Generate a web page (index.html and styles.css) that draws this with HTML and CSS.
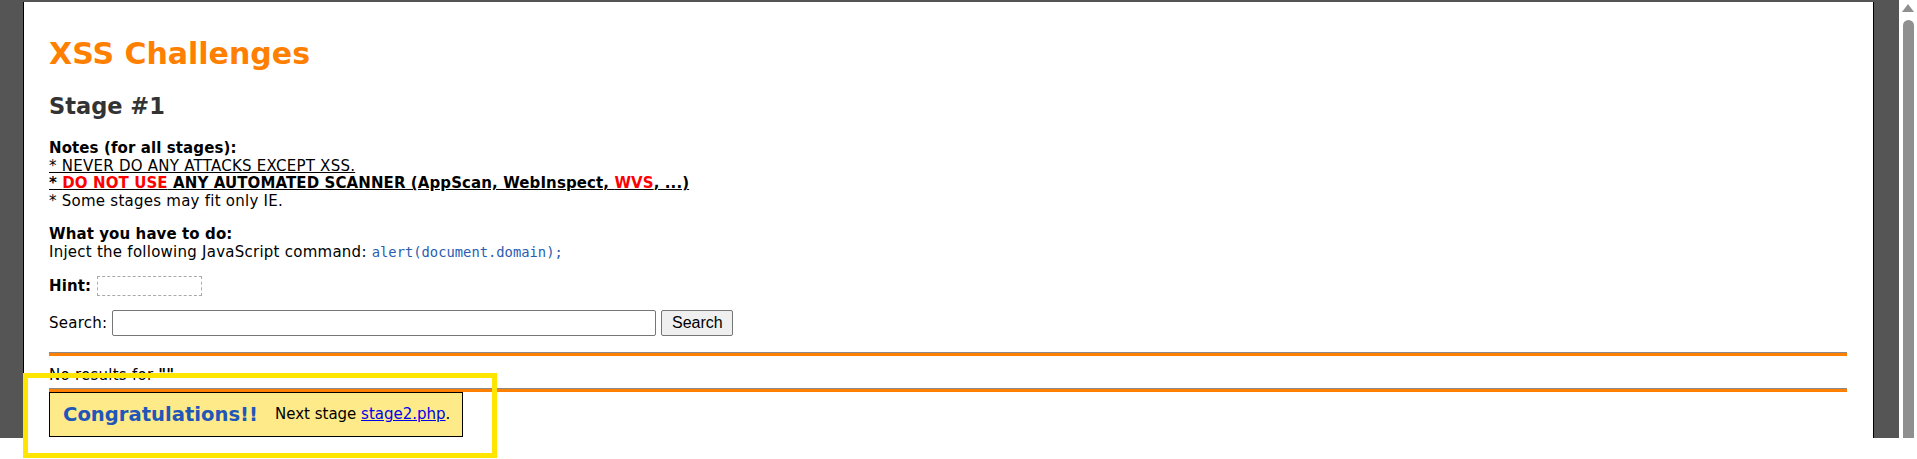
FILE: index.html
```html
<!DOCTYPE html>
<html lang="en">
<head>
<meta charset="utf-8">
<title>XSS Challenges (by yamagata21) - Stage #1</title>
<link rel="stylesheet" href="styles.css">
</head>
<body>
<div class="viewport">
  <div class="frame">
    <div class="page">
      <h1 class="title">XSS Challenges</h1>
      <h2 class="stage">Stage #1</h2>
      <div class="notes">
        <b>Notes (for all stages):</b><br>
        <span class="ul">* NEVER DO ANY ATTACKS EXCEPT XSS.</span><br>
        <span class="ul"><b>* <span class="red">DO NOT USE</span> ANY AUTOMATED SCANNER (AppScan, WebInspect, <span class="red">WVS</span>, ...)</b></span><br>
        * Some stages may fit only IE.
      </div>
      <div class="todo">
        <b>What you have to do:</b><br>
        Inject the following JavaScript command: <code class="code">alert(document.domain);</code>
      </div>
      <div class="hint">
        <b>Hint:</b> <span class="hintbox"></span>
      </div>
      <form class="search">
        <span class="label">Search:</span>
        <input class="field" type="text" name="p">
        <button class="btn" type="button">Search</button>
      </form>
      <div class="rule"></div>
      <div class="noresult">No results for <b>""</b></div>
      <div class="rule"></div>
      <div class="congrats">
        <span class="cg-title">Congratulations!!</span>
        <span class="cg-next">Next stage <a href="#" class="link">stage2.php</a>.</span>
      </div>
    </div>
  </div>
  <div class="scrollbar">
    <div class="arrow"></div>
    <div class="thumb"></div>
  </div>
</div>
<div class="highlight"></div>
</body>
</html>
```
FILE: styles.css
```css
html, body {
  margin: 0;
  padding: 0;
  background: #ffffff;
}
body {
  width: 1917px;
  height: 459px;
  overflow: hidden;
  position: relative;
  font-family: "DejaVu Sans", Verdana, sans-serif;
}
.viewport {
  display: flex;
  height: 438px;
}
.frame {
  flex: 1;
  background: #555555;
  padding: 2px 25px 0 23px;
  overflow: hidden;
}
.page {
  background: #ffffff;
  border-left: 1px solid #000;
  border-right: 1px solid #000;
  height: 100%;
  box-sizing: border-box;
  padding: 35px 26px 0 25px;
  color: #000;
  font-size: 15px;
  letter-spacing: 0.25px;
}
.page b {
  letter-spacing: 0.1px;
}
.title {
  margin: 0;
  font-size: 30px;
  line-height: 34px;
  color: #ff8000;
  font-weight: bold;
  letter-spacing: 0;
}
.stage {
  margin: 22px 0 0;
  font-size: 22.5px;
  line-height: 26px;
  color: #333;
  font-weight: bold;
  letter-spacing: 0;
}
.notes {
  margin-top: 21px;
  line-height: 17.7px;
}
.ul {
  text-decoration: underline;
}
.red {
  color: #ff0000;
}
.todo {
  margin-top: 14px;
  line-height: 18px;
}
.code {
  font-family: "DejaVu Sans Mono", monospace;
  font-size: 13.8px;
  color: #2a5db0;
  letter-spacing: 0;
}
.hint {
  margin-top: 15px;
  display: flex;
  align-items: center;
  gap: 6px;
  height: 20px;
}
.hintbox {
  display: inline-block;
  width: 103px;
  height: 18px;
  border: 1px dashed #aaa;
}
.search {
  margin: 14px 0 0;
  display: flex;
  align-items: center;
  gap: 5px;
}
.field {
  width: 544px;
  height: 26px;
  box-sizing: border-box;
  border: 1px solid #767676;
  border-radius: 2px;
  margin: 0;
  padding: 1px 2px;
}
.btn {
  width: 72px;
  height: 26px;
  box-sizing: border-box;
  margin: 0;
  border: 1px solid #767676;
  border-radius: 2px;
  background: #efefef;
  font-family: "Liberation Sans", Arial, sans-serif;
  font-size: 16px;
  color: #000;
  padding: 0 6px;
  letter-spacing: 0;
}
.rule {
  margin-top: 16px;
  height: 3px;
  background: #ff8000;
  border-top: 1px solid #8a8a8a;
}
.noresult {
  margin-top: 10px;
  line-height: 18px;
}
.noresult + .rule {
  margin-top: 4px;
}
.congrats {
  height: 45px;
  box-sizing: border-box;
  width: 414px;
  background: #ffea8a;
  border: 1px solid #000;
  display: flex;
  align-items: center;
  padding-left: 13px;
  gap: 17px;
  letter-spacing: 0;
}
.cg-title {
  font-size: 19.6px;
  font-weight: bold;
  color: #1f56b8;
}
.link {
  color: #0000ee;
}
.scrollbar {
  width: 18px;
  background: #ffffff;
}
.arrow {
  margin: 4px 0 0 3px;
  width: 0;
  height: 0;
  border-left: 6px solid transparent;
  border-right: 6px solid transparent;
  border-bottom: 8px solid #8f8f8f;
}
.thumb {
  margin: 8px 0 0 4px;
  width: 11px;
  height: 418px;
  background: #8f8f8f;
  border-radius: 6px 6px 0 0;
}
.highlight {
  position: absolute;
  left: 23px;
  top: 373px;
  width: 474px;
  height: 85px;
  box-sizing: border-box;
  border: 5px solid #ffe500;
}
```
